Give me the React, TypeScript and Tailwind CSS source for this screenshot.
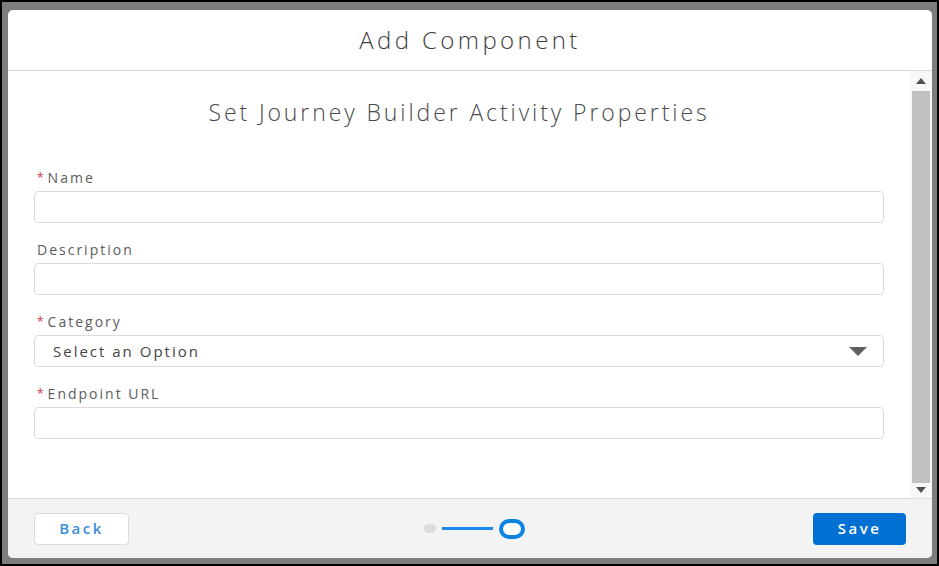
const font = "font-['Open_Sans','Liberation_Sans',sans-serif]";

const Field = ({ label, required, children }: { label: string; required?: boolean; children: React.ReactNode }) => (
  <div className="flex flex-col">
    <label className="flex h-[18px] items-center pl-[3px] text-[14px] leading-[18px] text-[#5c5c5c]">
      {required && <span className="mr-[4px] text-[12px] text-[#c23934]">*</span>}
      <span className="tracking-[2px]">{label}</span>
    </label>
    <div className="mt-[4px]">{children}</div>
  </div>
);

const TextInput = () => (
  <div className="h-[32px] w-full rounded-[4px] border border-[#dddbda] bg-white" />
);

const Select = () => (
  <div className="flex h-[32px] w-full items-center justify-between rounded-[4px] border border-[#dddbda] bg-white pl-[18px] pr-[16px]">
    <span className="text-[15px] tracking-[2px] text-[#444]">Select an Option</span>
    <svg width="18" height="9" viewBox="0 0 18 9">
      <path d="M0 0 H18 L9 9 Z" fill="#5f5f5f" />
    </svg>
  </div>
);

const App = () => {
  return (
    <div className={`${font} h-[566px] w-[939px] border-2 border-black bg-[#7d7d7d] pb-[2px] pl-[6px] pr-[5px] pt-[8px]`}>
      <div className="flex h-[548px] w-[924px] flex-col overflow-hidden rounded-[5px] bg-white">
        <header className="flex h-[61px] shrink-0 items-center justify-center border-b border-[#d8d8d8]">
          <h1 className="text-[24px] font-light tracking-[3.4px] text-[#3e3e3c]">Add Component</h1>
        </header>

        <div className="flex min-h-0 flex-1">
          <div className="flex-1 px-[26px] pt-[26px]">
            <h2 className="mb-[42px] text-center text-[23px] font-light leading-[30px] tracking-[2.9px] text-[#4a4a4a]">
              Set Journey Builder Activity Properties
            </h2>
            <div className="flex flex-col gap-[18px]">
              <Field label="Name" required>
                <TextInput />
              </Field>
              <Field label="Description">
                <TextInput />
              </Field>
              <Field label="Category" required>
                <Select />
              </Field>
              <Field label="Endpoint URL" required>
                <TextInput />
              </Field>
            </div>
          </div>

          {/* scrollbar */}
          <div className="flex w-[22px] shrink-0 flex-col items-center bg-[#f7f7f7] py-[5px]">
            <svg width="10" height="6" viewBox="0 0 10 6" className="mt-[2px]">
              <path d="M0 6 L5 0 L10 6 Z" fill="#505050" />
            </svg>
            <div className="mt-[7px] w-[18px] flex-1 bg-[#c1c1c1]" />
            <svg width="10" height="6" viewBox="0 0 10 6" className="mt-[4px]">
              <path d="M0 0 L5 6 L10 0 Z" fill="#505050" />
            </svg>
          </div>
        </div>

        <footer className="flex h-[60px] shrink-0 items-center justify-between border-t border-[#dddbda] bg-[#f3f3f3] px-[26px]">
          <button className="h-[32px] w-[95px] rounded-[4px] border border-[#dddbda] bg-white text-[15px] font-semibold tracking-[2.5px] text-[#3a8dd8]">
            Back
          </button>
          <div className="ml-[6px] flex items-center">
            <span className="h-[9px] w-[12px] rounded-full bg-[#dcdcdc]" />
            <span className="ml-[6px] h-[3px] w-[51px] bg-[#1589ee]" />
            <span className="ml-[6px] h-[20px] w-[26px] rounded-full border-[4px] border-[#0a84e0] bg-white" />
          </div>
          <button className="h-[32px] w-[93px] rounded-[4px] bg-[#0070d2] text-[15px] font-semibold tracking-[2.5px] text-white">
            Save
          </button>
        </footer>
      </div>
    </div>
  );
};

export default App;
